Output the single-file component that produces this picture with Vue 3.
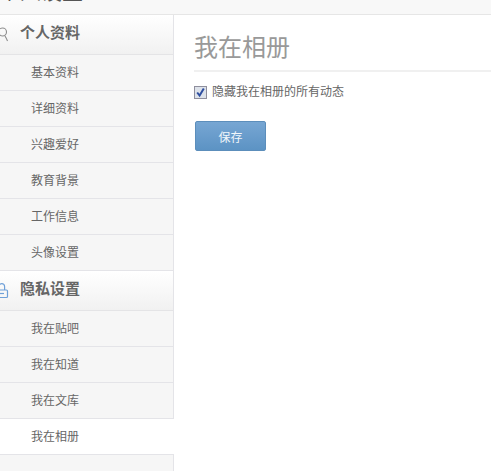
<script setup>
const groups = [
  { title: '个人资料', icon: 'user', items: ['基本资料', '详细资料', '兴趣爱好', '教育背景', '工作信息', '头像设置'] },
  { title: '隐私设置', icon: 'lock', items: ['我在贴吧', '我在知道', '我在文库', '我在相册'] },
]
const active = '我在相册'
</script>

<template>
  <div class="page">
    <header class="top"><span class="top-title">个人设置</span></header>
    <div class="body">
      <aside class="side">
        <template v-for="g in groups" :key="g.title">
          <div class="group">
            <svg v-if="g.icon === 'user'" class="gicon" width="12" height="16" viewBox="0 0 12 16" fill="none" stroke="#8c8c8c" stroke-width="1.1">
              <circle cx="2.5" cy="5" r="4" />
              <path d="M5 9 Q6.5 11.5 7.5 14" />
            </svg>
            <svg v-else class="gicon" width="12" height="16" viewBox="0 0 12 16" fill="none" stroke="#6fa0d8" stroke-width="1.2">
              <rect x="-3" y="7" width="10.5" height="7.5" rx="1" />
              <path d="M-1 7 V3.5 a2.8 2.8 0 0 1 5.6 0 V7" />
              <path d="M0 10.5 H4" />
            </svg>
            <span class="gtitle">{{ g.title }}</span>
          </div>
          <a v-for="it in g.items" :key="it" class="item" :class="{ on: it === active }">{{ it }}</a>
        </template>
      </aside>
      <main class="main">
        <h1 class="title">我在相册</h1>
        <label class="check">
          <span class="box">
            <svg width="11" height="11" viewBox="0 0 11 11" fill="none" stroke="#2f4fa0" stroke-width="2">
              <path d="M2.2 5.5 L4.6 8.6 L8.8 1.6" />
            </svg>
          </span>
          <span>隐藏我在相册的所有动态</span>
        </label>
        <button class="save" type="button">保存</button>
      </main>
    </div>
  </div>
</template>

<style>
html, body { margin: 0; background: #fff; overflow: hidden; }
</style>

<style scoped>
.page {
  width: 491px;
  height: 471px;
  overflow: hidden;
  font-family: "Liberation Sans", "Noto Sans CJK SC", sans-serif;
  display: flex;
  flex-direction: column;
}
.top {
  height: 14px;
  flex: none;
  background: #f8f8f8;
  border-bottom: 1px solid #e6e6e6;
  overflow: hidden;
}
.top-title {
  display: block;
  font-size: 21px;
  line-height: 28px;
  margin: -22px 0 0 -1px;
  color: #555;
  font-weight: 400;
}
.body { flex: 1; display: flex; min-height: 0; }
.side {
  width: 173px;
  flex: none;
  background: #f6f6f6;
  border-right: 1px solid #e4e4e8;
  display: flex;
  flex-direction: column;
}
.group {
  height: 39px;
  flex: none;
  border-bottom: 1px solid #e4e4e6;
  background: linear-gradient(#ffffff, #f1f1f1);
  display: flex;
  align-items: center;
  font-size: 15px;
  font-weight: 700;
  color: #666;
}
.gicon { margin-right: 8px; flex: none; }
.gtitle { line-height: 20px; margin-top: -3px; }
.item {
  height: 35px;
  flex: none;
  border-bottom: 1px solid #e4e4e8;
  padding-left: 31px;
  font-size: 12px;
  line-height: 37px;
  color: #666;
}
.item.on {
  background: #fff;
  margin-right: -1px;
}
.main { flex: 1; min-width: 0; padding: 0 0 0 20px; }
.title {
  margin: 0;
  height: 57px;
  box-sizing: border-box;
  border-bottom: 2px solid #f0f0f0;
  font-size: 24px;
  line-height: 38px;
  padding-top: 14px;
  font-weight: 400;
  color: #999;
}
.check {
  display: flex;
  align-items: center;
  margin: 13px 0 0 0;
  height: 14px;
  font-size: 12px;
  line-height: 14px;
  color: #666;
}
.box {
  width: 11px;
  height: 11px;
  flex: none;
  border: 1px solid #8f8f9d;
  background: #dde2ea;
  margin-right: 5px;
  display: flex;
}
.save {
  display: block;
  margin: 22px 0 0 1px;
  width: 71px;
  height: 30px;
  box-sizing: border-box;
  border: 1px solid #5c8ebb;
  border-radius: 2px;
  background: linear-gradient(#77a6d3, #5c93c4);
  color: #f0f6fb;
  font-family: inherit;
  font-size: 12px;
  padding: 0;
}
</style>
